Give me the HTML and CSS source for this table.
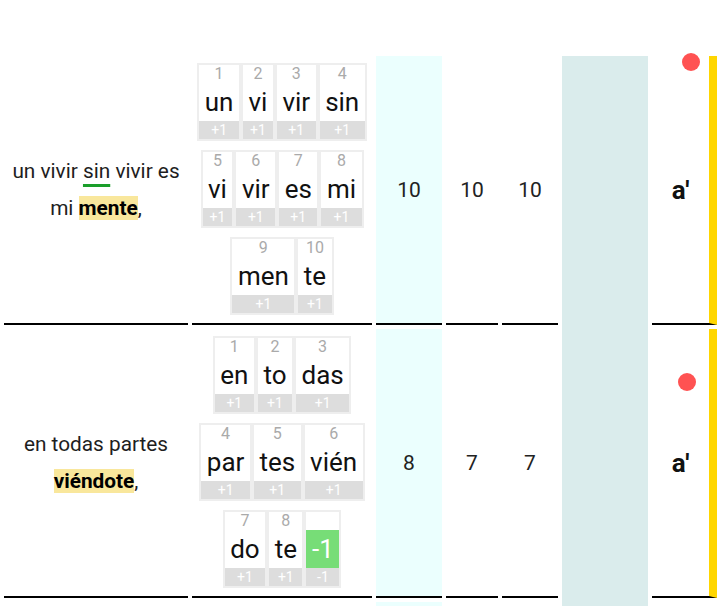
FILE: index.html
```html
<!DOCTYPE html>
<html lang="es">
<head>
<meta charset="utf-8">
<title>Escansión</title>
<link rel="stylesheet" href="styles.css">
</head>
<body>
<table class="scan">
  <colgroup>
    <col class="c-verse"><col class="c-syl"><col class="c-n1"><col class="c-n2"><col class="c-n3"><col class="c-gap"><col class="c-rhyme">
  </colgroup>
  <tbody>
    <tr>
      <td class="verse">un vivir <span class="stress">sin</span> vivir es<br>mi <span class="rhyme-word">mente</span>,</td>
      <td class="syls">
        <div class="syl-lines">
          <div class="syl-line">
            <div class="syl"><span class="syl-num">1</span><span class="syl-text">un</span><span class="syl-val">+1</span></div>
            <div class="syl"><span class="syl-num">2</span><span class="syl-text">vi</span><span class="syl-val">+1</span></div>
            <div class="syl"><span class="syl-num">3</span><span class="syl-text">vir</span><span class="syl-val">+1</span></div>
            <div class="syl"><span class="syl-num">4</span><span class="syl-text">sin</span><span class="syl-val">+1</span></div>
          </div>
          <div class="syl-line">
            <div class="syl"><span class="syl-num">5</span><span class="syl-text">vi</span><span class="syl-val">+1</span></div>
            <div class="syl"><span class="syl-num">6</span><span class="syl-text">vir</span><span class="syl-val">+1</span></div>
            <div class="syl"><span class="syl-num">7</span><span class="syl-text">es</span><span class="syl-val">+1</span></div>
            <div class="syl"><span class="syl-num">8</span><span class="syl-text">mi</span><span class="syl-val">+1</span></div>
          </div>
          <div class="syl-line">
            <div class="syl"><span class="syl-num">9</span><span class="syl-text">men</span><span class="syl-val">+1</span></div>
            <div class="syl"><span class="syl-num">10</span><span class="syl-text">te</span><span class="syl-val">+1</span></div>
          </div>
        </div>
      </td>
      <td class="num hl">10</td>
      <td class="num">10</td>
      <td class="num">10</td>
      <td class="gap" rowspan="3"></td>
      <td class="rhyme"><span class="dot dot-1"></span>a'</td>
    </tr>
    <tr>
      <td class="verse">en todas partes<br><span class="rhyme-word">viéndote</span>,</td>
      <td class="syls">
        <div class="syl-lines">
          <div class="syl-line">
            <div class="syl"><span class="syl-num">1</span><span class="syl-text">en</span><span class="syl-val">+1</span></div>
            <div class="syl"><span class="syl-num">2</span><span class="syl-text">to</span><span class="syl-val">+1</span></div>
            <div class="syl"><span class="syl-num">3</span><span class="syl-text">das</span><span class="syl-val">+1</span></div>
          </div>
          <div class="syl-line">
            <div class="syl"><span class="syl-num">4</span><span class="syl-text">par</span><span class="syl-val">+1</span></div>
            <div class="syl"><span class="syl-num">5</span><span class="syl-text">tes</span><span class="syl-val">+1</span></div>
            <div class="syl"><span class="syl-num">6</span><span class="syl-text">vién</span><span class="syl-val">+1</span></div>
          </div>
          <div class="syl-line">
            <div class="syl"><span class="syl-num">7</span><span class="syl-text">do</span><span class="syl-val">+1</span></div>
            <div class="syl"><span class="syl-num">8</span><span class="syl-text">te</span><span class="syl-val">+1</span></div>
            <div class="syl syl-adjust"><span class="syl-num"></span><span class="syl-text">-1</span><span class="syl-val">-1</span></div>
          </div>
        </div>
      </td>
      <td class="num hl">8</td>
      <td class="num">7</td>
      <td class="num">7</td>
      <td class="rhyme"><span class="dot dot-2"></span>a'</td>
    </tr>
    <tr class="tail">
      <td class="verse"></td>
      <td class="syls"></td>
      <td class="num hl"></td>
      <td class="num"></td>
      <td class="num"></td>
      <td class="rhyme plain"></td>
    </tr>
  </tbody>
</table>
</body>
</html>
```

FILE: styles.css
```css
html, body {
  margin: 0;
  padding: 0;
  background: #fff;
  overflow: hidden;
}

body {
  font-family: Roboto, "Liberation Sans", sans-serif;
  color: #222;
}

.scan {
  margin-top: 52px;
  width: 721px;
  table-layout: fixed;
  border-collapse: separate;
  border-spacing: 4px;
}

.c-verse { width: 184px; }
.c-syl { width: 180px; }
.c-n1 { width: 66px; }
.c-n2 { width: 52px; }
.c-n3 { width: 56px; }
.c-gap { width: 86px; }
.c-rhyme { width: 65px; }

.scan td {
  padding: 0;
  vertical-align: middle;
  text-align: center;
  border-bottom: 2px solid #000;
}

.verse {
  font-size: 20.8px;
  line-height: 37px;
  color: #1e1e1e;
}

.stress {
  text-decoration: underline 3px #1a9e2a;
  text-underline-offset: 6px;
  text-decoration-skip-ink: none;
}

.rhyme-word {
  font-weight: 700;
  color: #000;
  background: #f9e79c;
}

.syl-lines {
  display: flex;
  flex-direction: column;
  align-items: center;
  gap: 9px;
  padding: 7px 0 8px;
}

.syl-line {
  display: flex;
}

.syl {
  display: flex;
  flex-direction: column;
  border: 2px solid #eee;
  background: #fff;
}

.syl-num {
  height: 18px;
  font-size: 16px;
  line-height: 18px;
  color: #aaa;
}

.syl-text {
  padding: 0 5.5px;
  font-size: 26px;
  line-height: 38px;
  color: #111;
}

.syl-val {
  font-size: 14px;
  line-height: 18px;
  color: #fff;
  background: #ddd;
}

.syl-adjust .syl-text {
  background: #77dd77;
  color: #fff;
}

.num {
  font-size: 21px;
  color: #222;
}

.scan td.hl {
  background: #ebfffe;
}

.scan td.gap {
  background: #daecec;
  border-bottom: none;
}

.rhyme {
  position: relative;
  font-size: 26px;
  font-weight: 700;
  color: #111;
  border-right: 8px solid #ffd600;
}

.scan td.plain {
  border-right: none;
}

.dot {
  position: absolute;
  width: 18px;
  height: 18px;
  border-radius: 50%;
  background: #ff5252;
}

.dot-1 {
  top: -3px;
  left: 30px;
}

.dot-2 {
  top: 44px;
  left: 26px;
}

.tail td {
  height: 160px;
}
```
